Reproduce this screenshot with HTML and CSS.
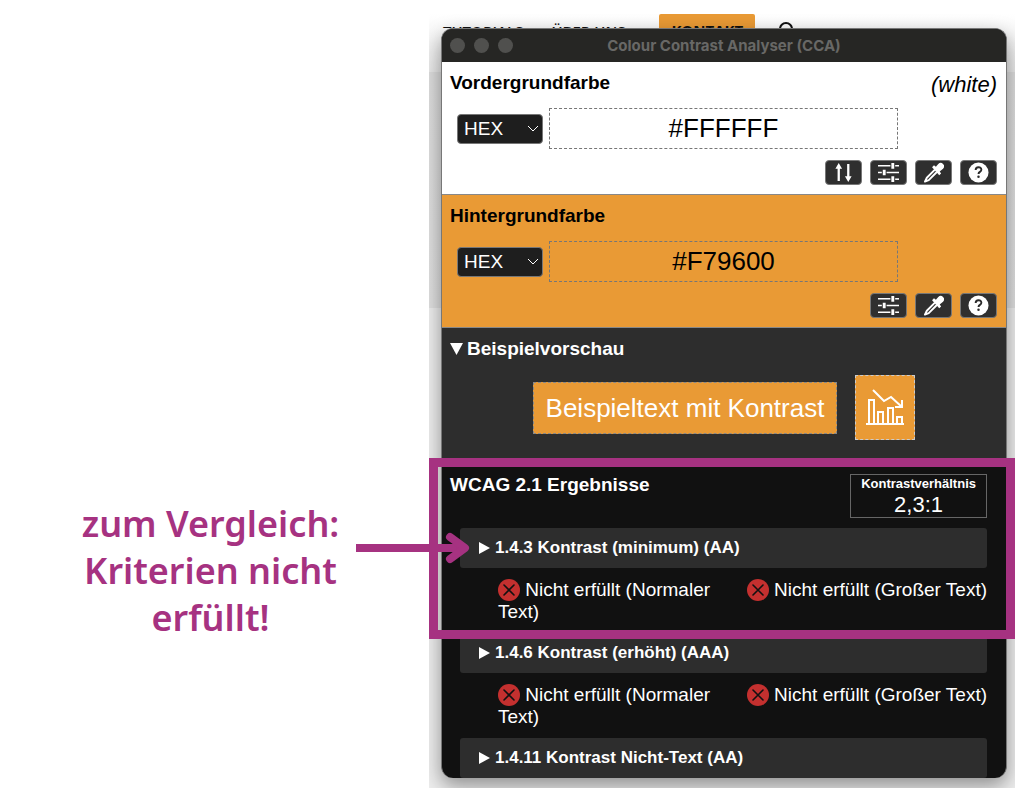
FILE: index.html
```html
<!DOCTYPE html>
<html lang="de">
<head>
  <meta charset="UTF-8">
  <title>Colour Contrast Analyser (CCA)</title>
  <link rel="stylesheet" href="styles.css">
</head>
<body>
  <!-- shared icons -->
  <svg class="sprite" width="0" height="0" aria-hidden="true">
    <symbol id="icon-swap" viewBox="0 0 22 22">
      <path d="M6 20V4M16 2v16" fill="none" stroke="#fff" stroke-width="2.400"/>
      <path d="M6 1l3.500 6h-7zM16 21l-3.500-6h7z" fill="#fff"/>
    </symbol>
    <symbol id="icon-sliders" viewBox="0 0 22 22">
      <path d="M0 4h13M18 4h4M0 11h4M9 11h13M0 18h13M18 18h4" stroke="#fff" stroke-width="1.600"/>
      <path d="M15.500 1v6M6.500 8v6M15.500 15v6" stroke="#fff" stroke-width="3"/>
    </symbol>
    <symbol id="icon-picker" viewBox="0 0 22 22">
      <path d="M12.500 8L4 16.500 2 20.500 6 19l8.500-8.500" fill="none" stroke="#fff" stroke-width="2" stroke-linejoin="round"/>
      <path d="M9.500 5.500l2-2 2 1.500 2.500-3a3.500 3.500 0 0 1 5 5l-3.500 3 1.500 2-2 2z" fill="#fff"/>
    </symbol>
    <symbol id="icon-help" viewBox="0 0 22 22">
      <circle cx="11" cy="11" r="10.500" fill="#fff"/>
      <path d="M8 8.500c0-4 6-4 6-.500 0 2.500-3 2.200-3 4.500" fill="none" stroke="#2b2b2b" stroke-width="2"/>
      <circle cx="11" cy="15.500" r="1.300" fill="#2b2b2b"/>
    </symbol>
    <symbol id="icon-fail" viewBox="0 0 22 22">
      <circle cx="11" cy="11" r="11" fill="#c4302f"/>
      <path d="M6 6l10 10M16 6L6 16" stroke="#111" stroke-width="1.600" stroke-linecap="round"/>
    </symbol>
  </svg>

  <main class="page">
    <p class="note">zum Vergleich:<br>Kriterien nicht<br>erfüllt!</p>

    <div class="shot">
      <div class="desktop">
        <nav class="site-nav">
          <a href="#">TUTORIALS</a>
          <a href="#">ÜBER UNS</a>
          <a class="contact" href="#">KONTAKT</a>
          <svg class="search" viewBox="0 0 18 18" aria-hidden="true">
            <circle cx="7" cy="7" r="6" fill="none" stroke="#111" stroke-width="2"/>
            <path d="M11 11l6 6" stroke="#111" stroke-width="2"/>
          </svg>
        </nav>

        <div class="window">
          <header class="titlebar">
            <span class="dots"><i></i><i></i><i></i></span>
            <span class="title">Colour Contrast Analyser (CCA)</span>
          </header>

          <section class="color foreground">
            <div class="color-head">
              <label for="fg">Vordergrundfarbe</label>
              <em>(white)</em>
            </div>
            <div class="color-row">
              <select aria-label="Format Vordergrundfarbe"><option>HEX</option></select>
              <input type="text" id="fg" value="#FFFFFF">
            </div>
            <div class="tools">
              <button aria-label="Farben tauschen"><svg><use href="#icon-swap"/></svg></button>
              <button aria-label="Farbregler"><svg><use href="#icon-sliders"/></svg></button>
              <button aria-label="Pipette"><svg><use href="#icon-picker"/></svg></button>
              <button aria-label="Hilfe"><svg><use href="#icon-help"/></svg></button>
            </div>
          </section>

          <section class="color background">
            <div class="color-head">
              <label for="bg">Hintergrundfarbe</label>
            </div>
            <div class="color-row">
              <select aria-label="Format Hintergrundfarbe"><option>HEX</option></select>
              <input type="text" id="bg" value="#F79600">
            </div>
            <div class="tools">
              <button aria-label="Farbregler"><svg><use href="#icon-sliders"/></svg></button>
              <button aria-label="Pipette"><svg><use href="#icon-picker"/></svg></button>
              <button aria-label="Hilfe"><svg><use href="#icon-help"/></svg></button>
            </div>
          </section>

          <details class="preview" open>
            <summary>Beispielvorschau</summary>
            <div class="samples">
              <span class="sample-text">Beispieltext mit Kontrast</span>
              <span class="sample-icon">
                <svg viewBox="0 0 38 37" fill="none" stroke="#fff" stroke-width="2" aria-hidden="true">
                  <path d="M7 1l11 11 7-4 11 10M36 11v7h-7M0 35h38"/>
                  <path d="M3 35V11h5v24M12 35V23h5v12M22 35V19h5v16M31 35v-7h5v7"/>
                </svg>
              </span>
            </div>
          </details>

          <section class="results">
            <div class="results-head">
              <h2>WCAG 2.1 Ergebnisse</h2>
              <div class="ratio"><b>Kontrastverhältnis</b><span>2,3:1</span></div>
            </div>
            <details class="criterion"><summary>1.4.3 Kontrast (minimum) (AA)</summary></details>
            <div class="verdicts">
              <span><svg><use href="#icon-fail"/></svg> Nicht erfüllt (Normaler Text)</span>
              <span><svg><use href="#icon-fail"/></svg> Nicht erfüllt (Großer Text)</span>
            </div>
            <details class="criterion"><summary>1.4.6 Kontrast (erhöht) (AAA)</summary></details>
            <div class="verdicts">
              <span><svg><use href="#icon-fail"/></svg> Nicht erfüllt (Normaler Text)</span>
              <span><svg><use href="#icon-fail"/></svg> Nicht erfüllt (Großer Text)</span>
            </div>
            <details class="criterion"><summary>1.4.11 Kontrast Nicht-Text (AA)</summary></details>
          </section>
        </div>
      </div>

      <!-- frame and arrow over the first criterion -->
      <div class="highlight">
        <svg class="arrow" viewBox="0 0 114 32" fill="none" stroke="#a63281" stroke-width="8" aria-hidden="true">
          <path d="M0 16h106"/>
          <path d="M94 5l15 11-15 11" stroke-linecap="round" stroke-linejoin="round"/>
        </svg>
      </div>
    </div>
  </main>
</body>
</html>
```
FILE: styles.css
```css
body {
  margin: 0;
  background: #fff;
  font-family: "Liberation Sans", Arial, sans-serif;
  font-size: 19px;
}
.sprite {
  position: absolute;
}
.page {
  display: grid;
  grid-template-columns: minmax(0, 429fr) minmax(0, 586fr);
  padding: 14px 9px 0 0;
}
.note {
  margin: 486px 8px 0 0;
  color: #a63281;
  font-family: "Noto Sans", "Open Sans", sans-serif;
  font-size: 36px;
  font-weight: 600;
  line-height: 47px;
  text-align: center;
}
.shot {
  position: relative;
}
.desktop {
  overflow: hidden;
  padding: 0 8px 10px 12px;
  background: linear-gradient(#fff, #e8e8e8 58px, #ddd 58px, #e0e0e0 294px, #eee 294px);
}

/* site behind the window */
.site-nav {
  display: flex;
  align-items: flex-start;
  overflow: hidden;
  height: 14px;
  font-family: "Open Sans", sans-serif;
  font-size: 15px;
  font-weight: 600;
  line-height: 20px;
}
.site-nav a {
  margin: 7px 26px 0 2px;
  color: #111;
  text-decoration: none;
}
.site-nav .contact {
  margin: 0 24px 0 8px;
  padding: 6px 12px;
  background: #e99a35;
  border-radius: 2px;
  font-weight: 700;
}
.search {
  width: 18px;
  height: 18px;
  margin-top: 8px;
}

.window {
  position: relative;
  overflow: hidden;
  border: 1px solid #777;
  border-bottom: 0;
  border-radius: 12px;
  background: #111;
  box-shadow: 0 8px 20px rgba(0, 0, 0, .4);
}
.titlebar {
  display: grid;
  grid-template-columns: 1fr auto 1fr;
  align-items: center;
  height: 33px;
  background: #262624;
  color: #686866;
  font-family: Inter, sans-serif;
  font-size: 15px;
  font-weight: 700;
}
.dots {
  display: flex;
  gap: 9px;
  padding-left: 8px;
}
.dots i {
  width: 15px;
  height: 15px;
  border-radius: 50%;
  background: #50504e;
}

/* colour inputs */
.color {
  padding: 10px 9px 9px 8px;
  border-bottom: 1px solid #888;
  background: #fff;
}
.background {
  background: #e99a35;
}
.color-head {
  display: flex;
  justify-content: space-between;
  height: 24px;
  margin-bottom: 12px;
  font-weight: 700;
  line-height: 22px;
}
.color-head em {
  font-size: 22px;
  font-weight: 400;
  line-height: 26px;
}
.color-row {
  display: flex;
  align-items: center;
  gap: 6px;
  margin: 0 99px 11px 7px;
}
.color-row select {
  box-sizing: border-box;
  width: 86px;
  height: 30px;
  padding: 0 6px;
  appearance: none;
  border: 1px solid #777;
  border-radius: 4px;
  background: #1e1e1e url("data:image/svg+xml,%3Csvg xmlns='http://www.w3.org/2000/svg' width='10' height='6'%3E%3Cpath d='M0 0l5 5 5-5' fill='none' stroke='%23fff'/%3E%3C/svg%3E") no-repeat right 4px center;
  color: #fff;
  font: 19px "Liberation Sans", Arial, sans-serif;
}
.color-row input {
  box-sizing: border-box;
  flex: 1;
  min-width: 0;
  height: 41px;
  padding: 0;
  border: 1px dashed #777;
  background: none;
  font: 26px "Liberation Sans", Arial, sans-serif;
  text-align: center;
}
.tools {
  display: flex;
  justify-content: flex-end;
  gap: 8px;
}
.tools button {
  display: grid;
  place-items: center;
  width: 37px;
  height: 25px;
  padding: 0;
  border: 1px solid #777;
  border-radius: 4px;
  background: #2f2f2f;
}
.tools svg {
  width: 21px;
  height: 21px;
}

/* preview */
summary {
  display: flex;
  align-items: center;
  list-style: none;
  font-weight: 700;
}
summary::before {
  content: "";
  width: 11px;
  height: 12px;
  margin-right: 5px;
  background: #fff;
  clip-path: polygon(0 0, 100% 50%, 0 100%);
}
.preview {
  padding: 9px 8px 23px;
  background: #2d2d2d;
  color: #fff;
}
.preview summary {
  height: 24px;
  margin-bottom: 14px;
}
.preview summary::before {
  width: 13px;
  margin-right: 4px;
  clip-path: polygon(0 0, 100% 0, 50% 100%);
}
.samples {
  display: flex;
  justify-content: center;
  align-items: center;
  gap: 18px;
}
.sample-text {
  padding: 0 12px;
  border: 1px dashed #888;
  background: #e99a35;
  font-size: 26px;
  line-height: 50px;
}
.sample-icon {
  display: grid;
  place-items: center;
  width: 58px;
  height: 63px;
  border: 1px dashed #ccc;
  background: #e99a35;
}
.sample-icon svg {
  width: 38px;
  height: 37px;
}

/* results */
.results {
  padding: 11px 19px 0 18px;
  color: #fff;
}
.results-head {
  display: flex;
  justify-content: space-between;
  margin: 0 0 10px -10px;
}
.results h2 {
  margin: 0;
  font-size: 19px;
  line-height: 22px;
}
.ratio {
  display: flex;
  flex-direction: column;
  padding: 0 10px;
  border: 1px solid #666;
  text-align: center;
}
.ratio b {
  font-size: 13px;
  line-height: 18px;
}
.ratio span {
  font-size: 22px;
  line-height: 24px;
}
.criterion summary {
  height: 40px;
  padding-left: 19px;
  border-radius: 3px;
  background: #2d2d2d;
  font-size: 17px;
}
.verdicts {
  display: grid;
  grid-template-columns: 1fr auto;
  padding: 11px 0 10px 38px;
  line-height: 22px;
}
.verdicts svg {
  width: 22px;
  height: 22px;
  vertical-align: top;
}

.highlight {
  position: absolute;
  top: 444px;
  right: 0;
  left: 0;
  box-sizing: border-box;
  height: 181px;
  border: 9px solid #a63281;
}
.arrow {
  position: absolute;
  top: 65px;
  left: -82px;
  width: 114px;
  height: 32px;
}
```
